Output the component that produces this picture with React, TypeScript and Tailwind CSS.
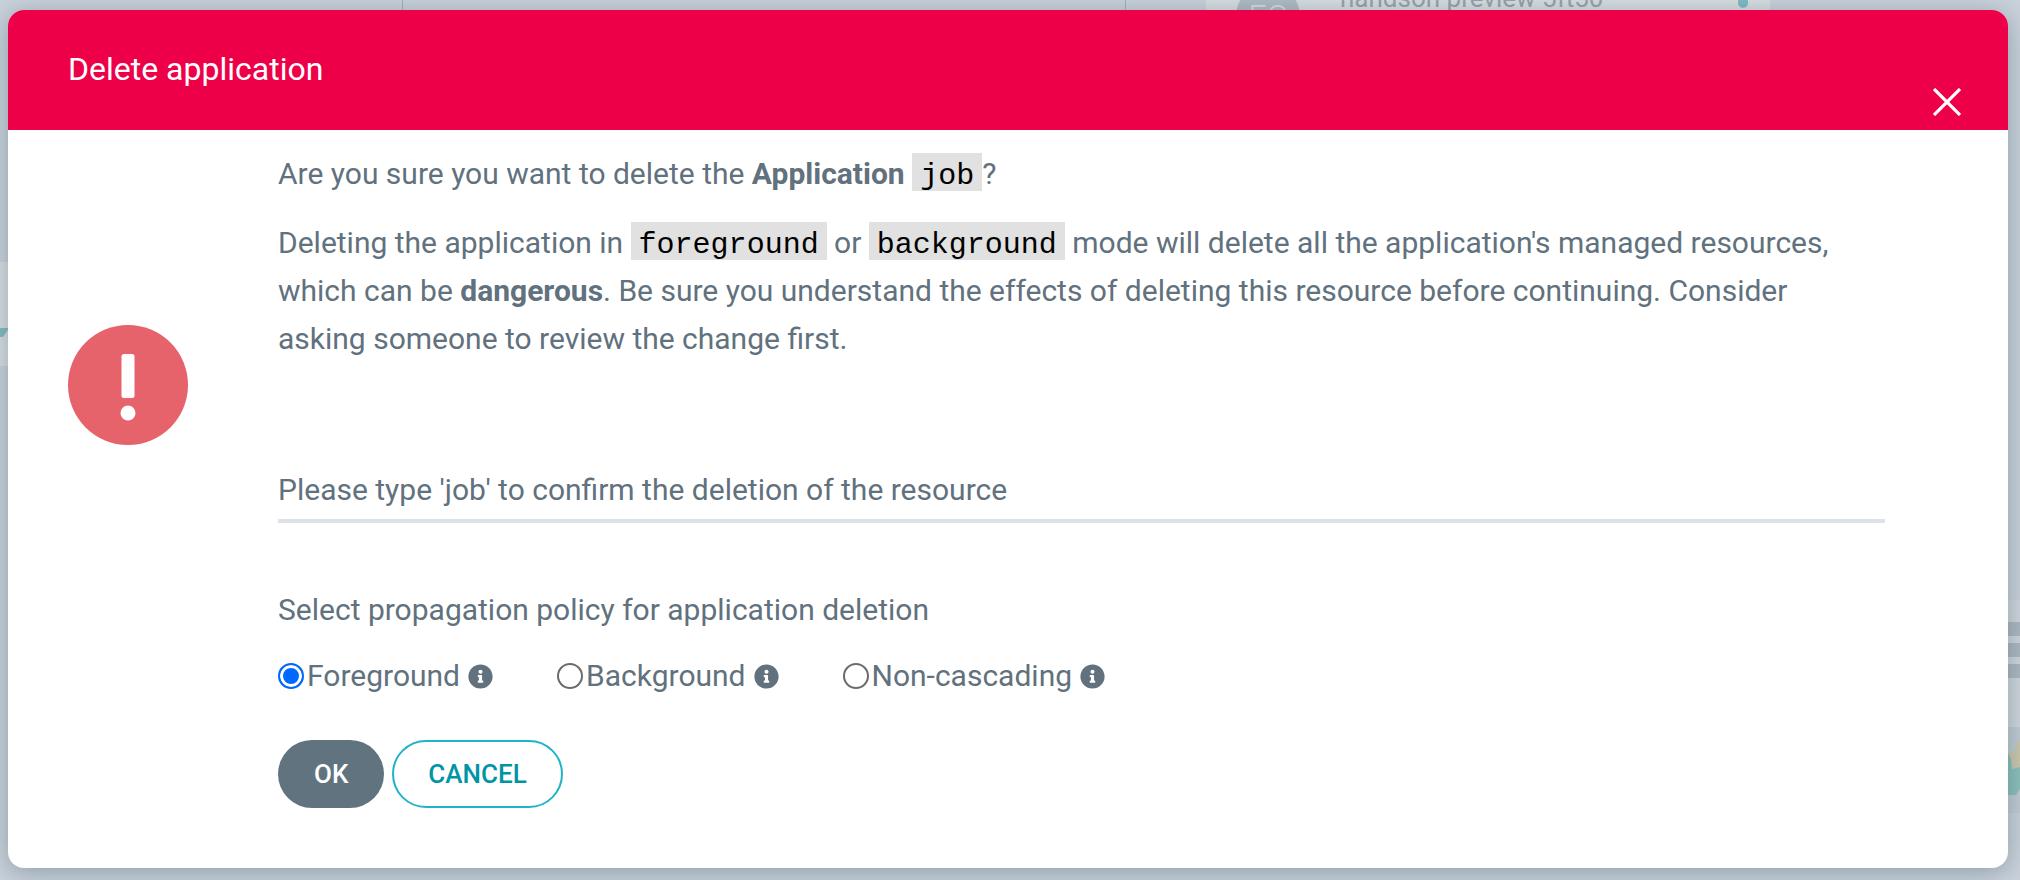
import React from "react";

const policies = ["Foreground", "Background", "Non-cascading"];

function Code({ children }: { children: React.ReactNode }) {
  return (
    <code className="inline-block bg-[#e1e1e1] px-2 pt-2 text-[30px] leading-[30px] text-black font-['Liberation_Mono',monospace]">
      {children}
    </code>
  );
}

function InfoIcon() {
  return (
    <svg viewBox="0 0 512 512" className="ml-2 size-[25px] shrink-0" fill="currentColor" aria-hidden="true">
      <path d="M256 8C119 8 8 119 8 256s111 248 248 248 248-111 248-248S393 8 256 8zm0 110a42 42 0 1 1 0 84 42 42 0 0 1 0-84zm56 254a12 12 0 0 1-12 12h-88a12 12 0 0 1-12-12v-24a12 12 0 0 1 12-12h12v-64h-12a12 12 0 0 1-12-12v-24a12 12 0 0 1 12-12h64a12 12 0 0 1 12 12v100h12a12 12 0 0 1 12 12z" />
    </svg>
  );
}

/* The dimmed application page that stays visible round the dialog. */
function Backdrop() {
  return (
    <div className="absolute inset-0 flex flex-col overflow-hidden bg-[#cbd2db]" aria-hidden="true">
      <div className="flex h-5 justify-end overflow-hidden pr-[250px]">
        <div className="w-[724px] border-x border-[#a3afb8]" />
        <div className="ml-20 flex w-[564px] items-center gap-10 bg-[#d9dee1] pl-[30px] pr-[22px]">
          <div className="mt-3 flex size-16 shrink-0 items-center justify-center rounded-full bg-[#b0bcc3] text-[32px] font-light text-[#d9dee1]">
            EC
          </div>
          <div className="-mt-6 flex-1 whitespace-nowrap text-[26px] leading-8 text-[#98a3ab]">handson preview 5ft50</div>
          <div className="-mt-4 h-3 w-[10px] rounded-full bg-[#7fbcc6]" />
        </div>
      </div>
      <div className="flex justify-between">
        <div className="mt-[242px] flex h-[104px] w-3 items-end bg-[#d9dee1] pb-7">
          <svg className="h-[10px] w-3" viewBox="0 0 12 10">
            <path d="M0 0h9L3 9H0z" fill="#83bdc4" />
          </svg>
        </div>
        <div className="mt-[580px] w-3">
          <div className="flex h-[127px] flex-col gap-[7px] bg-[#d0d7dc] pt-[22px]">
            <div className="h-[14px] bg-[#aeb9c2]" />
            <div className="h-[14px] bg-[#aeb9c2]" />
            <div className="h-[14px] bg-[#aeb9c2]" />
          </div>
          <div className="h-[86px] bg-[#c3ccd4] pt-[8px]">
            <svg className="h-[60px] w-3" viewBox="0 0 12 60">
              <path d="M0 18l6 -2 6 -13v30h-12z" fill="#cfc8ad" />
              <path d="M0 18l3 6 1 10 8 -2v22l-4 6h-8z" fill="#8fc0bb" />
            </svg>
          </div>
        </div>
      </div>
    </div>
  );
}

export default function App() {
  return (
    <div className="relative min-h-screen pb-3 pl-2 pr-3 pt-[10px] font-[Roboto,sans-serif] text-[30px] leading-[48px] text-[#61717d]">
      <Backdrop />
      <section
        role="dialog"
        aria-labelledby="dialog-title"
        className="relative overflow-hidden rounded-2xl bg-white pb-[60px] shadow-[0_4px_26px_rgba(20,60,75,0.35)]"
      >
        <header className="flex h-[120px] items-start justify-between bg-[#ee0048] pl-[60px] pr-[47px] text-white">
          <h2 id="dialog-title" className="pt-[35px] text-[32px] font-normal">
            Delete application
          </h2>
          <button type="button" aria-label="Close" className="mt-[78px]">
            <svg viewBox="0 0 28 28" className="size-7" fill="none" stroke="currentColor" strokeWidth="3.2">
              <path d="M1 1L27 27M27 1L1 27" />
            </svg>
          </button>
        </header>
        <form className="flex items-start gap-[90px] pl-[60px] pr-[123px]" onSubmit={(e) => e.preventDefault()}>
          <svg viewBox="0 0 120 120" className="mt-[195px] size-[120px] shrink-0" aria-hidden="true">
            <circle cx="60" cy="60" r="60" fill="#e6636b" />
            <rect x="53.5" y="29" width="13" height="44" rx="2.5" fill="#fff" />
            <circle cx="60" cy="88" r="7.5" fill="#fff" />
          </svg>
          <div className="min-w-0 flex-1 pt-5">
            <p>
              Are you sure you want to delete the <strong className="font-bold">Application</strong> <Code>job</Code>?
            </p>
            <p className="mt-[21px] pr-4">
              Deleting the application in <Code>foreground</Code> or <Code>background</Code> mode will delete all the
              application's managed resources, which can be <strong className="font-bold">dangerous</strong>. Be sure
              you understand the effects of deleting this resource before continuing. Consider asking someone to review
              the change first.
            </p>
            <input
              type="text"
              aria-label="Please type 'job' to confirm the deletion of the resource"
              placeholder="Please type 'job' to confirm the deletion of the resource"
              className="mt-[100px] block h-[60px] w-full border-b-4 border-[#dce2e8] pb-1 placeholder:text-[#61717d] placeholder:opacity-100 focus:outline-none"
            />
            <fieldset className="mt-[63px]">
              <legend>Select propagation policy for application deletion</legend>
              <div className="mt-[18px] flex gap-[64px]">
                {policies.map((policy, i) => (
                  <label key={policy} className="flex items-center">
                    <input
                      type="radio"
                      name="policy"
                      defaultChecked={i === 0}
                      className="mr-[3px] size-[26px] appearance-none rounded-full border-2 border-[#6b6b6b] bg-white checked:border-[#0067ff] checked:bg-[#0067ff] checked:shadow-[inset_0_0_0_3px_white]"
                    />
                    {policy}
                    <InfoIcon />
                  </label>
                ))}
              </div>
            </fieldset>
            <div className="mt-10 flex gap-2 text-[26px] font-medium">
              <button type="submit" className="h-[68px] rounded-full bg-[#61737f] px-9 text-white">
                OK
              </button>
              <button type="button" className="h-[68px] rounded-full border-2 border-[#1fb4c8] px-[34px] text-[#0095a5]">
                CANCEL
              </button>
            </div>
          </div>
        </form>
      </section>
    </div>
  );
}
